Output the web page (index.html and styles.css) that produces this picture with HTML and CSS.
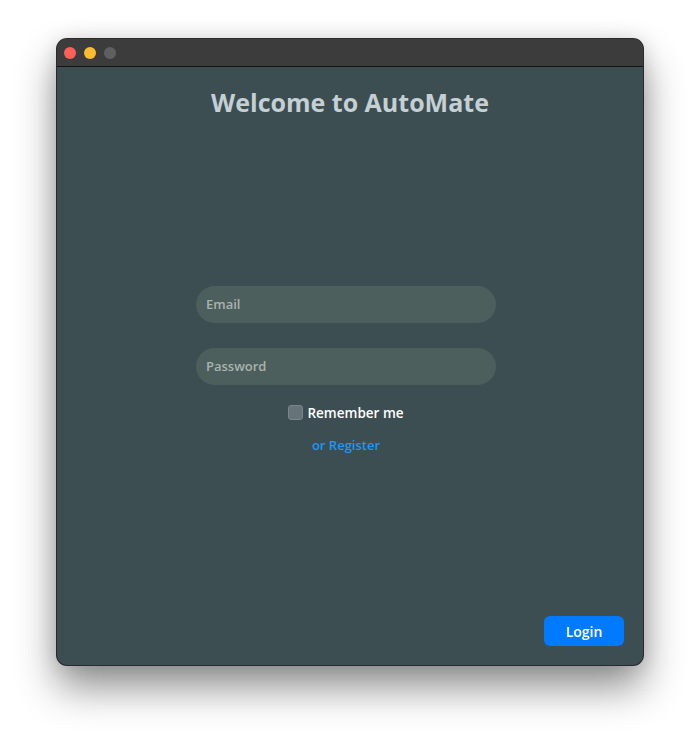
FILE: index.html
```html
<!DOCTYPE html>
<html>
<head>
<meta charset="utf-8">
<link rel="stylesheet" href="styles.css">
</head>
<body>
<div class="window">
  <div class="titlebar">
    <span class="light red"></span>
    <span class="light yellow"></span>
    <span class="light gray"></span>
  </div>
  <div class="content">
    <h1 class="title">Welcome to AutoMate</h1>
    <div class="form">
      <input class="field" type="text" placeholder="Email">
      <input class="field" type="password" placeholder="Password">
      <label class="remember"><span class="check"></span>Remember me</label>
      <a class="register" href="#">or Register</a>
    </div>
    <div class="footer">
      <button class="login">Login</button>
    </div>
  </div>
</div>
</body>
</html>
```
FILE: styles.css
```css
html, body {
  margin: 0;
  padding: 0;
  background: #ffffff;
}
body {
  font-family: "Open Sans", "Noto Sans", sans-serif;
  padding-top: 39px;
  height: 740px;
  box-sizing: border-box;
}
.window {
  width: 586px;
  height: 626px;
  margin: 0 auto;
  border-radius: 10px;
  overflow: hidden;
  display: flex;
  flex-direction: column;
  background: #3c4e52;
  box-shadow: 0 0 0 1px #2a2a2a, 0 22px 40px rgba(0, 0, 0, 0.45), 0 0 20px rgba(0,0,0,0.12);
}
.titlebar {
  height: 27px;
  background: #3c3c3c;
  border-bottom: 1px solid #141414;
  display: flex;
  align-items: center;
  gap: 8px;
  padding-left: 7px;
  flex-shrink: 0;
}
.light {
  width: 12px;
  height: 12px;
  border-radius: 50%;
}
.red { background: #fe5f57; }
.yellow { background: #febc2e; }
.gray { background: #5f5f5f; }
.content {
  flex: 1;
  display: flex;
  flex-direction: column;
}
.title {
  margin: 0;
  padding-top: 19px;
  text-align: center;
  font-size: 25px;
  line-height: 32px;
  font-weight: 700;
  color: #c4d0d3;
}
.form {
  flex: 1;
  display: flex;
  flex-direction: column;
  align-items: center;
  justify-content: center;
  padding-top: 5px;
  padding-right: 8px;
}
.field {
  width: 300px;
  height: 37px;
  box-sizing: border-box;
  border: none;
  outline: none;
  border-radius: 19px;
  background: #4d5f5c;
  padding: 0 10px;
  font-family: inherit;
  font-size: 13px;
  font-weight: 600;
  color: #ffffff;
  margin-bottom: 25px;
}
.field::placeholder {
  color: #a8b2af;
}
.field + .field {
  margin-bottom: 19px;
}
.remember {
  display: flex;
  align-items: center;
  gap: 4px;
  font-size: 13.5px;
  font-weight: 600;
  color: #ffffff;
  line-height: 18px;
}
.check {
  width: 13px;
  height: 13px;
  border-radius: 3px;
  background: #667377;
  border: 1px solid #7a8689;
}
.register {
  margin-top: 14px;
  font-size: 13px;
  font-weight: 600;
  color: #2196f3;
  text-decoration: none;
  line-height: 18px;
}
.footer {
  display: flex;
  justify-content: flex-end;
  padding: 0 19px 19px;
}
.login {
  width: 80px;
  height: 30px;
  border: none;
  border-radius: 6px;
  background: #007aff;
  color: #ffffff;
  font-family: inherit;
  font-size: 14px;
  font-weight: 600;
}
```
